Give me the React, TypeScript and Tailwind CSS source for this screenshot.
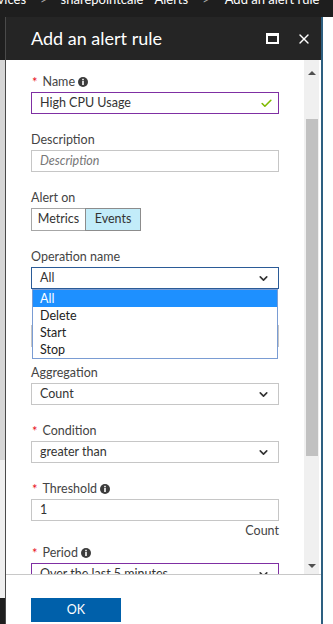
import { ChevronDown, Check, X } from 'lucide-react'
import { ReactNode } from 'react'

const font = { fontFamily: '"Segoe UI", Lato, "Noto Sans", sans-serif' }

const Info = () => (
  <svg width="10" height="10" viewBox="0 0 10 10" className="ml-[3px] inline-block" aria-hidden>
    <circle cx="5" cy="5" r="5" fill="#3c3c3c" />
    <rect x="4.2" y="4" width="1.6" height="4" fill="#fff" />
    <rect x="4.2" y="1.8" width="1.6" height="1.5" fill="#fff" />
  </svg>
)

type LabelProps = { text: string; required?: boolean; info?: boolean }

const Label = ({ text, required, info }: LabelProps) => (
  <div className="mb-[2px] flex h-[17px] items-center pt-px text-[12.5px] leading-4 text-[#444]">
    {required && <span className="mr-[5px] ml-px text-[13px] text-[#e81123]">*</span>}
    <span>{text}</span>
    {info && <Info />}
  </div>
)

const Select = ({ value, className }: { value: string; className?: string }) => (
  <div
    className={`flex h-[22px] w-[248px] items-center justify-between border bg-white pr-[8px] pl-[8px] text-[12.5px] text-[#333] ${
      className ?? 'border-[#c6c6c6]'
    }`}
  >
    <span>{value}</span>
    <ChevronDown size={13} strokeWidth={3} className="text-[#333]" />
  </div>
)

const Field = ({ children, className }: { children: ReactNode; className?: string }) => (
  <div className={className ?? 'mt-[17px]'}>{children}</div>
)

export default function App() {
  return (
    <div style={font} className="relative h-[624px] w-[333px] overflow-hidden bg-white">
      {/* breadcrumb strip */}
      <div className="relative h-[17px] overflow-hidden bg-[#1e1e1e] text-[13px] whitespace-nowrap text-white">
        <div className="-mt-[10px] -ml-[21px] flex items-center">
          <span>Services</span>
          <span className="ml-[14px] text-[#aaa]">&gt;</span>
          <span className="ml-[13px]">sharepointcale</span>
          <span className="ml-[11px]">Alerts</span>
          <span className="ml-[14px] text-[#aaa]">&gt;</span>
          <span className="ml-[15px]">Add an alert rule</span>
        </div>
      </div>

      <div className="flex h-[607px]">
        {/* left edge of the blade behind */}
        <div className="flex w-[5px] flex-col">
          <div className="h-[43px] bg-[#1e1e1e]" />
          <div className="h-[400px] bg-[#d6d6d6]" />
          <div className="h-[138px] bg-[#efefef]" />
          <div className="flex-1 bg-[#1e1e1e]" />
        </div>
        <div className="w-px bg-[#4a4a4a]" />

        {/* blade */}
        <div className="flex w-[315px] flex-col">
          <div className="flex h-[43px] items-center bg-[#252525] pr-[9px] pl-[25px]">
            <span className="flex-1 text-[18px] text-white">Add an alert rule</span>
            <div className="mr-[17px] h-[11px] w-[13px] border-x-2 border-t-[3px] border-b-2 border-white" />
            <X size={16} strokeWidth={2} className="text-white" />
          </div>

          <div className="flex h-[514px]">
            <div className="relative w-[298px] overflow-hidden pt-[13px] pl-[25px]">
              <Field className="mt-0">
                <Label text="Name" required info />
                <div className="flex h-[22px] w-[248px] items-center justify-between border border-[#7f2fa3] pr-[5px] pl-[8px] text-[12.5px] text-[#333]">
                  <span>High CPU Usage</span>
                  <Check size={13} strokeWidth={3} className="text-[#7fba00]" />
                </div>
              </Field>

              <Field>
                <Label text="Description" />
                <div className="flex h-[22px] w-[248px] items-center border border-[#c6c6c6] pl-[8px] text-[12.5px] text-[#777] italic">
                  Description
                </div>
              </Field>

              <Field>
                <Label text="Alert on" />
                <div className="flex h-[23px] text-[12.5px] text-[#333]">
                  <div className="flex w-[55px] items-center justify-center border border-[#a6a6a6] bg-white">Metrics</div>
                  <div className="-ml-px flex w-[56px] items-center justify-center border border-[#8c8c8c] bg-[#c2ecf9]">
                    Events
                  </div>
                </div>
              </Field>

              <Field className="relative mt-[17px]">
                <Label text="Operation name" />
                <Select value="All" className="border-[#2b5b97]" />
                <div className="absolute top-full left-px z-10 w-[246px] border border-[#7a9cd3] bg-white text-[12.5px] leading-[17px] text-[#222]">
                  <div className="h-[17px] bg-[#1e90ff] pl-[7px] text-white">All</div>
                  <div className="h-[17px] pl-[7px]">Delete</div>
                  <div className="h-[17px] pl-[7px]">Start</div>
                  <div className="h-[17px] pl-[7px]">Stop</div>
                </div>
              </Field>

              {/* field hidden behind the open list */}
              <Field>
                <div className="mb-[2px] h-[17px]" />
                <div className="h-[22px] w-[248px] border border-[#c6c6c6]" />
              </Field>

              <Field>
                <Label text="Aggregation" />
                <Select value="Count" />
              </Field>

              <Field>
                <Label text="Condition" required />
                <Select value="greater than" />
              </Field>

              <Field>
                <Label text="Threshold" required info />
                <div className="flex h-[22px] w-[248px] items-center border border-[#c6c6c6] pl-[8px] text-[12.5px] text-[#333]">
                  1
                </div>
                <div className="mt-[2px] h-4 w-[248px] text-right text-[12.5px] leading-4 text-[#444]">Count</div>
              </Field>

              <Field className="mt-[5px]">
                <Label text="Period" required info />
                <Select value="Over the last 5 minutes" className="border-[#7f2fa3]" />
              </Field>
            </div>

            {/* scrollbar */}
            <div className="flex w-[15px] flex-col items-center bg-[#f0f0f0]">
              <div className="flex h-[25px] items-center">
                <div className="h-0 w-0 border-x-[4px] border-b-[4px] border-x-transparent border-b-[#505050]" />
              </div>
              <div className="mt-[34px] h-[337px] w-[12px] bg-[#c1c1c1]" />
              <div className="flex-1" />
              <div className="mb-[6px] h-0 w-0 border-x-[4px] border-t-[4px] border-x-transparent border-t-[#505050]" />
            </div>
            <div className="w-[2px] bg-white" />
          </div>

          <div className="flex-1 border-t border-[#c8c8c8] pt-[21px] pl-[25px]">
            <button className="h-[24px] w-[90px] bg-[#0060aa] text-[12.5px] text-white">OK</button>
          </div>
        </div>

        <div className="w-[2px] bg-[#2d5f80]" />
        <div className="flex-1 bg-white" />
      </div>
    </div>
  )
}
